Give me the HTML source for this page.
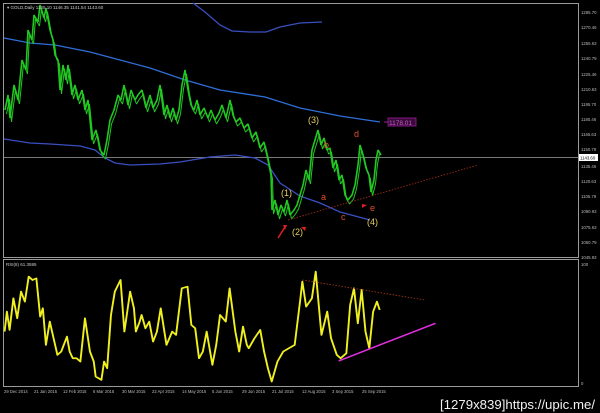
<!DOCTYPE html>
<html><head><meta charset="utf-8"><style>
html,body{margin:0;padding:0;background:#000;width:600px;height:413px;overflow:hidden}
svg{display:block}
text{font-family:"Liberation Sans",sans-serif}
</style></head><body>
<svg width="600" height="413" viewBox="0 0 600 413" xmlns="http://www.w3.org/2000/svg">
<rect width="600" height="413" fill="#000"/>
<rect x="3.5" y="3.5" width="575" height="254" fill="none" stroke="#9a9a9a" stroke-width="1"/>
<rect x="3.5" y="259.5" width="575" height="127" fill="none" stroke="#9a9a9a" stroke-width="1"/>
<line x1="4" y1="157.5" x2="578" y2="157.5" stroke="#777" stroke-width="1"/>
<polyline fill="none" stroke="#3a4fc0" stroke-width="1.3" points="193,3 205,12 220,25 232,31 250,32 266,32 280,27 300,23 322,22"/>
<polyline fill="none" stroke="#2f6fd8" stroke-width="1.3" points="4,38 30,43 55,45 90,52 120,60 150,68 185,80 220,90 265,97 300,108 340,116 380,122"/>
<polyline fill="none" stroke="#3a4fc0" stroke-width="1.3" points="4,139 30,143 50,144 80,146 95,150 105,158 115,163 130,165 160,164 180,162 210,157 235,155 255,158 268,165 280,183 300,196 320,203 340,212 370,220"/>
<g fill="none" stroke="#22c822" stroke-width="1.6" stroke-linejoin="bevel">
<polyline points="5,110 8,95 10,118 14,85 18,100 22,60 26,70 28,30 32,40 34,15 38,22 40,5 44,18 46,8 50,30 53,40 55,55 58,60 60,90 63,65 66,80 68,65 72,95 75,85 78,100 82,90 85,110 88,100 92,140 96,130 100,150 104,155 107,140 110,120 114,110 118,95 121,100 124,85 128,105 131,90 135,100 138,95 142,90 146,108 150,95 153,108 157,100 160,85 164,115 167,105 170,118 173,108 176,120 179,110 182,85 185,70 188,90 191,105 194,110 197,100 200,115 204,108 208,118 211,110 215,120 219,113 222,105 226,118 230,100 233,115 236,122 240,118 244,128 248,124 252,138 256,132 260,148 264,142 268,160 271,175 272,210 275,200 278,215 281,205 284,212 287,200 290,215 294,210 297,205 300,195 303,185 306,170 309,180 312,150 315,140 318,130 321,145 324,138 327,150 330,148 333,168 336,160 339,180 342,175 345,195 348,200 352,195 355,185 358,165 360,145 363,155 366,168 369,175 371,192 374,180 376,160 378,150 381,155"/>
<polyline transform="translate(1.5,4)" stroke-width="1" points="5,110 8,95 10,118 14,85 18,100 22,60 26,70 28,30 32,40 34,15 38,22 40,5 44,18 46,8 50,30 53,40 55,55 58,60 60,90 63,65 66,80 68,65 72,95 75,85 78,100 82,90 85,110 88,100 92,140 96,130 100,150 104,155 107,140 110,120 114,110 118,95 121,100 124,85 128,105 131,90 135,100 138,95 142,90 146,108 150,95 153,108 157,100 160,85 164,115 167,105 170,118 173,108 176,120 179,110 182,85 185,70 188,90 191,105 194,110 197,100 200,115 204,108 208,118 211,110 215,120 219,113 222,105 226,118 230,100 233,115 236,122 240,118 244,128 248,124 252,138 256,132 260,148 264,142 268,160 271,175 272,210 275,200 278,215 281,205 284,212 287,200 290,215 294,210 297,205 300,195 303,185 306,170 309,180 312,150 315,140 318,130 321,145 324,138 327,150 330,148 333,168 336,160 339,180 342,175 345,195 348,200 352,195 355,185 358,165 360,145 363,155 366,168 369,175 371,192 374,180 376,160 378,150"/>
</g>
<line x1="288" y1="220" x2="478" y2="165" stroke="#b03018" stroke-width="0.8" stroke-dasharray="1.5,1.5"/>
<line x1="278" y1="238" x2="285" y2="227" stroke="#e02020" stroke-width="1.5"/>
<path d="M283,225 L287,225 L285,230 Z" fill="#e02020"/>
<path d="M301,227 L306,227 L305,231 Z" fill="#e02020"/>
<path d="M362,204 L367,205 L362,208 Z" fill="#e02020"/>
<g font-family="Liberation Serif,serif" font-size="9" fill="#e8d060">
<text x="308" y="123">(3)</text>
<text x="281" y="196">(1)</text>
<text x="292" y="235">(2)</text>
<text x="367" y="225">(4)</text>
</g>
<g font-family="Liberation Serif,serif" font-size="9" fill="#e0502a">
<text x="354" y="137">d</text>
<text x="324" y="148">b</text>
<text x="321" y="200">a</text>
<text x="341" y="220">c</text>
<text x="370" y="211">e</text>
</g>
<line x1="384" y1="122" x2="388" y2="122" stroke="#a020a0"/>
<rect x="388" y="118" width="28" height="8" fill="#3a0a3a" stroke="#a020a0" stroke-width="0.8"/>
<text x="389" y="125" font-size="6.5" fill="#c060c0">1178.01</text>
<g font-size="4.3" fill="#bbb">
<text x="581" y="14">1285.70</text><text x="581" y="29">1270.46</text><text x="581" y="45">1255.63</text><text x="581" y="60">1240.79</text><text x="581" y="76">1225.46</text><text x="581" y="91">1210.63</text><text x="581" y="106">1195.70</text><text x="581" y="121">1180.46</text><text x="581" y="136">1165.63</text><text x="581" y="151">1150.79</text><text x="581" y="168">1135.46</text><text x="581" y="183">1120.63</text><text x="581" y="198">1105.79</text><text x="581" y="213">1090.93</text><text x="581" y="229">1075.63</text><text x="581" y="244">1060.79</text><text x="581" y="259">1045.93</text>
<text x="581" y="266">100</text><text x="581" y="385">0</text>
</g>
<rect x="579" y="154" width="19" height="7" fill="#fff"/>
<text x="580" y="159.5" font-size="4.3" fill="#000">1143.60</text>
<text x="7" y="9" font-size="4.5" fill="#ccc">▾ GOLD,Daily  1145.10 1146.35 1141.54 1143.60</text>
<text x="6" y="266" font-size="4.5" fill="#ccc">RSI(8) 61.3595</text>
<g transform="translate(0,255) scale(0.3827,0.333)">
<polyline fill="none" stroke="#f0f020" stroke-width="5" stroke-linejoin="round" points="12,230 18,170 25,225 35,130 45,190 55,110 65,140 75,65 85,75 95,70 105,185 112,160 120,270 130,200 140,250 150,300 160,290 175,245 182,290 190,310 200,310 210,320 222,190 235,290 245,320 250,365 265,375 272,320 280,340 290,180 300,110 315,75 325,230 335,150 340,110 350,160 355,230 365,200 370,180 380,220 390,200 400,260 410,230 420,160 435,270 450,230 460,240 475,100 490,95 500,210 510,220 520,310 530,290 540,230 555,330 565,270 575,180 590,200 600,100 615,230 625,290 635,215 645,270 650,280 665,250 680,225 690,290 700,340 710,380 725,320 740,290 755,280 770,270 785,130 790,80 800,155 815,130 825,50 840,240 855,170 865,250 880,300 890,310 905,295 915,150 925,100 935,205 945,105 955,230 965,280 975,170 985,140 992,165"/>
<line x1="790" y1="75" x2="1110" y2="135" stroke="#a03a1a" stroke-width="2.5" stroke-dasharray="4,4"/>
<line x1="885" y1="318" x2="1138" y2="205" stroke="#e030e0" stroke-width="4.5"/>
</g>
<g font-size="4.2" fill="#bbb">
<text x="4" y="393">29 Dec 2014</text><text x="34" y="393">21 Jan 2015</text><text x="63" y="393">12 Feb 2015</text><text x="93" y="393">6 Mar 2015</text><text x="122" y="393">30 Mar 2015</text><text x="152" y="393">22 Apr 2015</text><text x="182" y="393">14 May 2015</text><text x="212" y="393">5 Jun 2015</text><text x="242" y="393">29 Jun 2015</text><text x="272" y="393">21 Jul 2015</text><text x="302" y="393">12 Aug 2015</text><text x="332" y="393">3 Sep 2015</text><text x="362" y="393">25 Sep 2015</text>
</g>
<text x="440" y="409" font-family="DejaVu Sans Mono,monospace" font-size="12.5" fill="#f2f2f2" textLength="155" lengthAdjust="spacingAndGlyphs">[1279x839]https://upic.me/</text>
</svg>
</body></html>
